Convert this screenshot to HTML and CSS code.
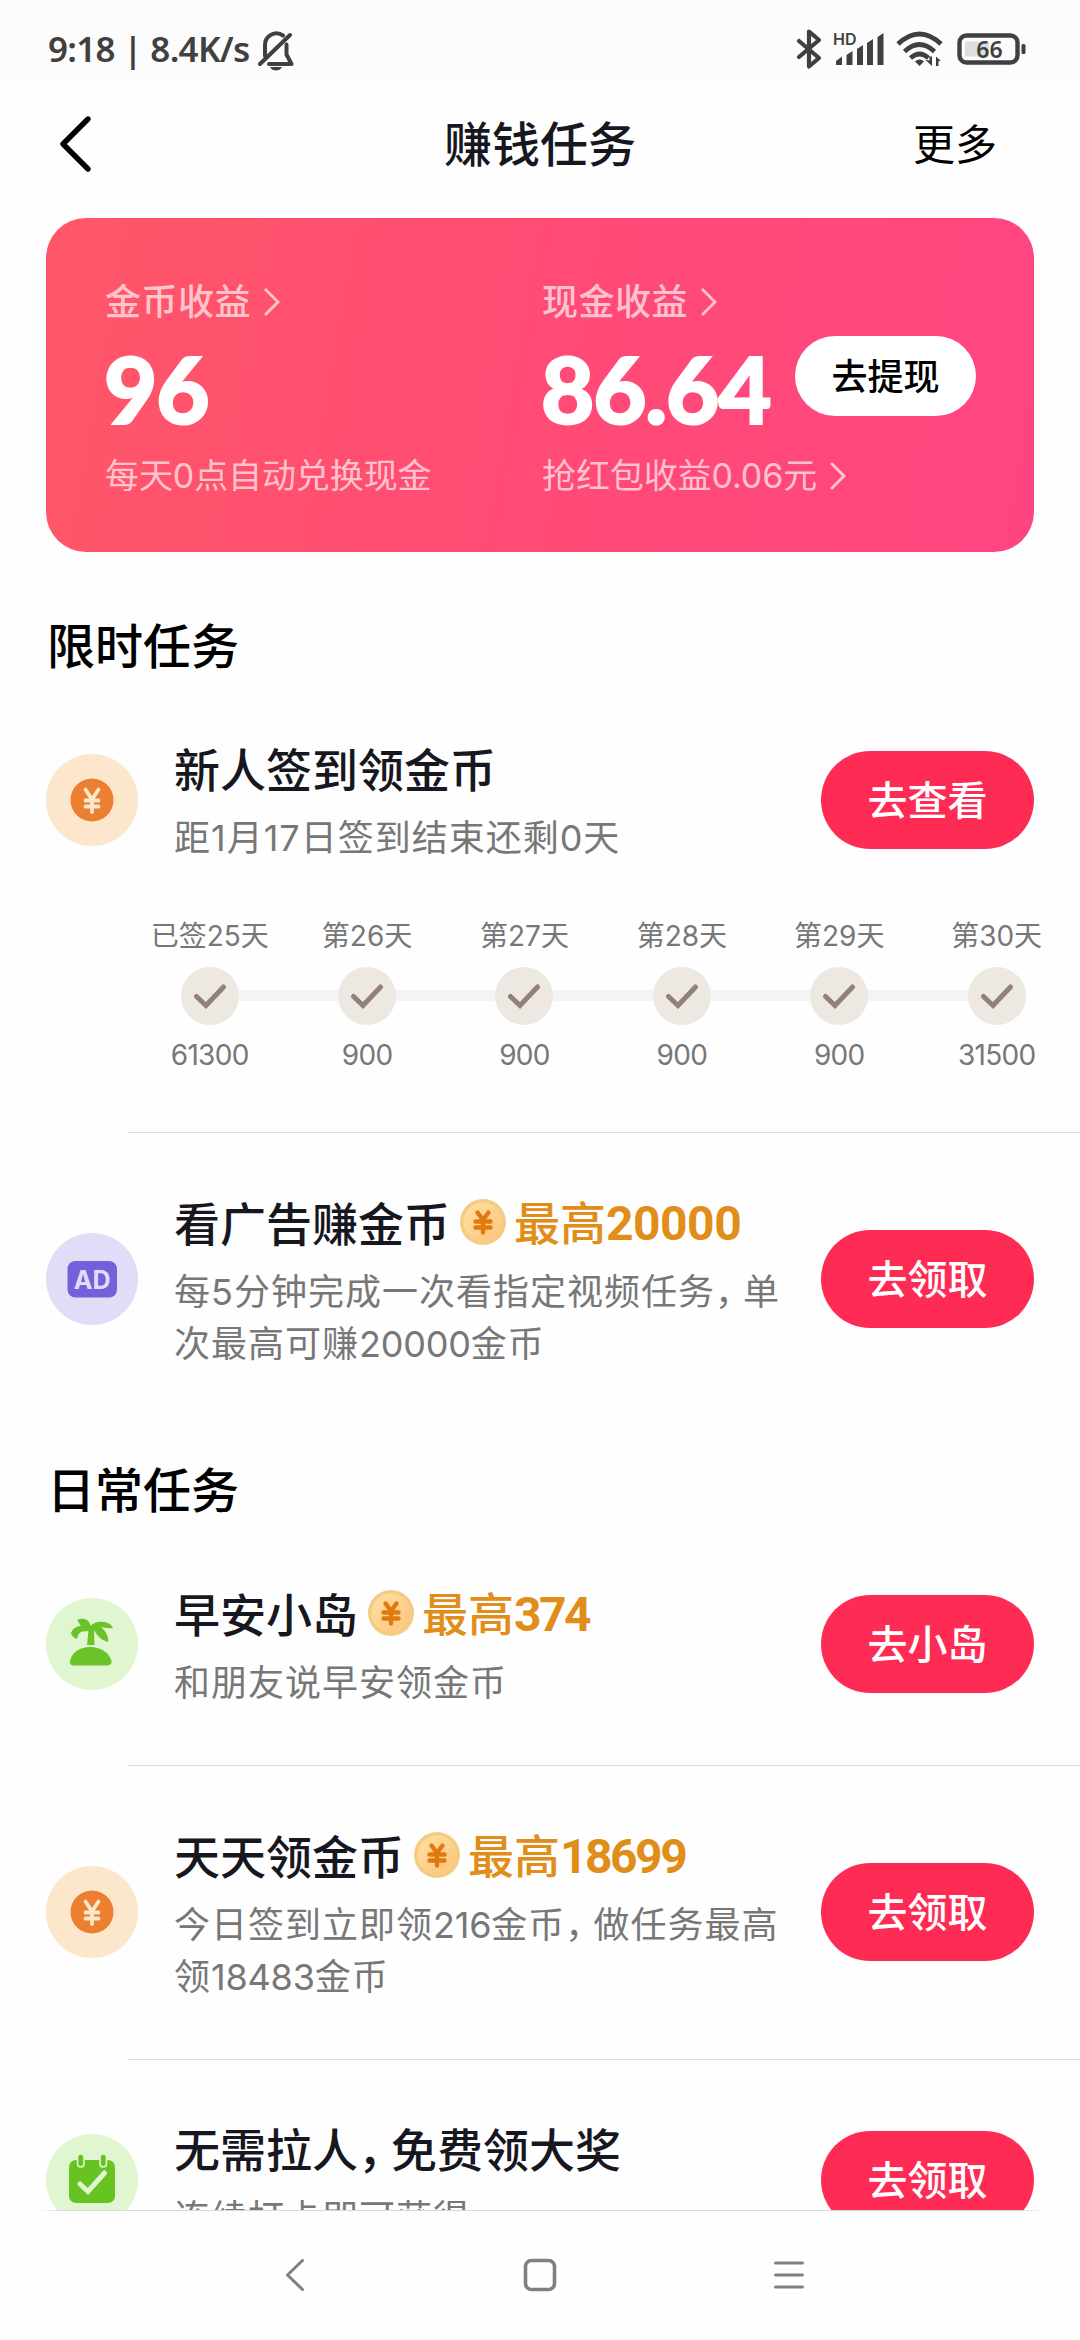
FILE: index.html
```html
<!DOCTYPE html>
<html lang="zh-CN">
<head>
<meta charset="utf-8">
<title>赚钱任务</title>
<link rel="stylesheet" href="styles.css">
</head>
<body>
<svg class="defs" width="0" height="0">
  <defs>
    <linearGradient id="coinFill" x1="0" y1="0" x2="1" y2="1">
      <stop offset="0" stop-color="#ffe0a0"/><stop offset="1" stop-color="#fdc47c"/>
    </linearGradient>
    <symbol id="coin" viewBox="0 0 46 46">
      <circle cx="23" cy="23" r="23" fill="#f3cc84"/>
      <circle cx="23" cy="23" r="19.5" fill="url(#coinFill)"/>
      <path d="M17.500 13.500l5.500 7.500 5.500-7.500M15.500 22.500h15M15.500 28.500h15M23 21v12.500" fill="none" stroke="#e07a10" stroke-width="4.400" stroke-linecap="round" stroke-linejoin="round"/>
    </symbol>
    <symbol id="yuan" viewBox="0 0 92 92">
      <circle cx="46" cy="46" r="46" fill="#fce6cc"/>
      <circle cx="46" cy="46" r="21.5" fill="#ec7f30"/>
      <path d="M39.500 35.500l6.500 10 6.500-10M39.500 46.500h13M39.500 52.500h13M46 45v13" fill="none" stroke="#fce6cc" stroke-width="3.800" stroke-linecap="round" stroke-linejoin="round"/>
    </symbol>
    <symbol id="chev" viewBox="0 0 18 30">
      <path d="M2 2l13 13L2 28" fill="none" stroke="currentColor" stroke-width="2.800"/>
    </symbol>
    <symbol id="done" viewBox="0 0 58 58">
      <circle cx="29" cy="29" r="29" fill="#ede8e2"/>
      <path d="M15.500 29.500L25 38.500 42.500 20" fill="none" stroke="#93807a" stroke-width="5" stroke-linecap="round" stroke-linejoin="miter"/>
    </symbol>
  </defs>
</svg>
<div class="screen">
  <header class="status">
    <span class="clock">9:18 | 8.4K/s</span>
    <svg class="bell" width="36" height="40" viewBox="0 0 36 40" fill="none" stroke="#404040" stroke-width="4">
      <path d="M7 25V14a11.500 11.500 0 0 1 18-9.500M28.500 13.500v10l5 9.500H11M2 33L32 4" stroke-linejoin="round" stroke-linecap="round"/>
      <path d="M12 36h12q-2 3.500-6 3.500T12 36z" fill="#404040" stroke="none"/>
    </svg>
    <span class="grow"></span>
    <svg width="232" height="42" viewBox="0 0 232 42" fill="none" stroke="#404040">
      <path d="M5 13l20 17-10 8.500V3.500L25 12 5 29" stroke-width="4.200" stroke-linejoin="round" stroke-linecap="round"/>
      <g fill="#404040" stroke="none">
        <text class="hd" x="39" y="17">HD</text>
        <path d="M42 37v-4l6-4.500v8.500zM52.500 37V27l6-4v14zM63 37V21l6-4v20zM73 37V15l6-4v26zM83.500 37V9l6-4v32z"/>
        <path d="M125.500 38l-4.500-4.500q4.500-4 9 0z"/>
        <path d="M138 38v-9.500h-2.500v4l-4-.500zM142 28.500V38h2.500v-5h2.500z"/>
      </g>
      <path d="M104 16q21.500-20 43 0" stroke-width="4.800"/>
      <path d="M110.500 23.500q15-14 30 0" stroke-width="4.800"/>
      <path d="M116.500 30q9-8 18 0" stroke-width="4.600"/>
      <rect x="165.500" y="7.500" width="58" height="27" rx="7" stroke-width="4.400"/>
      <rect x="171" y="13.500" width="24" height="15" fill="#dedede" stroke="none"/>
      <rect x="227.500" y="16" width="4" height="10" rx="1.500" fill="#404040" stroke="none"/>
      <text class="batt" x="195.500" y="29.500" text-anchor="middle">66</text>
    </svg>
  </header>

  <nav class="bar">
    <svg class="back" width="36" height="60" viewBox="0 0 36 60"><path d="M32 4L7 29l25 25" fill="none" stroke="#000" stroke-width="5.400" stroke-linecap="round" stroke-linejoin="round"/></svg>
    <h1>赚钱任务</h1>
    <a class="more">更多</a>
  </nav>

  <section class="card">
    <div class="earn">
      <div class="earn-label">金币收益<svg class="chev"><use href="#chev"/></svg></div>
      <div class="amount">96</div>
      <div class="note">每天0点自动兑换现金</div>
    </div>
    <div class="earn">
      <div class="earn-label">现金收益<svg class="chev"><use href="#chev"/></svg></div>
      <div class="amount">86.64</div>
      <div class="note">抢红包收益0.06元<svg class="chev"><use href="#chev"/></svg></div>
    </div>
    <a class="withdraw">去提现</a>
  </section>

  <main>
    <h2>限时任务</h2>
    <article class="task first">
      <svg class="icon"><use href="#yuan"/></svg>
      <div class="text"><h3>新人签到领金币</h3><p>距1月17日签到结束还剩0天</p></div>
      <a class="btn">去查看</a>
    </article>
    <div class="steps">
      <div class="step"><span>已签25天</span><svg class="tick"><use href="#done"/></svg><span class="coins">61300</span></div>
      <div class="step"><span>第26天</span><svg class="tick"><use href="#done"/></svg><span class="coins">900</span></div>
      <div class="step"><span>第27天</span><svg class="tick"><use href="#done"/></svg><span class="coins">900</span></div>
      <div class="step"><span>第28天</span><svg class="tick"><use href="#done"/></svg><span class="coins">900</span></div>
      <div class="step"><span>第29天</span><svg class="tick"><use href="#done"/></svg><span class="coins">900</span></div>
      <div class="step"><span>第30天</span><svg class="tick"><use href="#done"/></svg><span class="coins">31500</span></div>
    </div>
    <hr>
    <article class="task">
      <svg class="icon" viewBox="0 0 92 92"><circle cx="46" cy="46" r="46" fill="#e2dcf8"/><rect x="21.500" y="28" width="49.500" height="36.500" rx="8" fill="#7560dc"/><text class="ad" x="46.200" y="55.500" text-anchor="middle">AD</text></svg>
      <div class="text"><h3>看广告赚金币<svg class="coin"><use href="#coin"/></svg><span class="prize">最高<b class="wide">20000</b></span></h3><p>每5分钟完成一次看指定视频任务<span class="comma">，</span>单<br>次最高可赚<span class="num">20000</span>金币</p></div>
      <a class="btn">去领取</a>
    </article>

    <h2 class="daily">日常任务</h2>
    <article class="task first">
      <svg class="icon" viewBox="0 0 92 92"><circle cx="46" cy="46" r="46" fill="#dff6d0"/>
        <path d="M24 63c2-9 10-14 20-14s19 5 21.500 14c.5 3-2 4.500-5 4.500H28c-3 0-4.500-1.500-4-4.500z" fill="#6ac328"/>
        <path d="M41 47l1.500-14-6 .5c-4 1-4.500 4-5.500 7.500-3-1-5.500-3-6-6 2-5 6-7 10-7l-4-6c6-3 12-1 13.500 5.500 4-3 8-4.500 12-3.500 5 0 9 2.500 10.500 6-4 .5-8 0-12-1 4 3.500 8 9 7 15-6-1.500-11-6-14-12l.5 15z" fill="#6ac328"/></svg>
      <div class="text"><h3>早安小岛<svg class="coin"><use href="#coin"/></svg><span class="prize">最高<b>374</b></span></h3><p>和朋友说早安领金币</p></div>
      <a class="btn">去小岛</a>
    </article>
    <hr>
    <article class="task">
      <svg class="icon"><use href="#yuan"/></svg>
      <div class="text"><h3>天天领金币<svg class="coin"><use href="#coin"/></svg><span class="prize">最高<b>18699</b></span></h3><p>今日签到立即领<span class="num">216</span>金币<span class="comma">，</span>做任务最高<br>领<span class="num">18483</span>金币</p></div>
      <a class="btn">去领取</a>
    </article>
    <hr>
    <article class="task">
      <svg class="icon" viewBox="0 0 92 92"><circle cx="46" cy="46" r="46" fill="#dff6d0"/><rect x="23" y="26" width="46" height="43" rx="7" fill="#66c322"/>
        <rect x="31.500" y="20" width="6.500" height="13" rx="3.200" fill="#66c322" stroke="#dff6d0" stroke-width="1.600"/><rect x="54" y="20" width="6.500" height="13" rx="3.200" fill="#66c322" stroke="#dff6d0" stroke-width="1.600"/>
        <path d="M34 50l8 7.500L58.500 39" fill="none" stroke="#dff6d0" stroke-width="5" stroke-linecap="round"/></svg>
      <div class="text"><h3>无需拉人<span class="comma">，</span>免费领大奖</h3><p>连续打卡即可获得</p></div>
      <a class="btn">去领取</a>
    </article>
  </main>

  <footer class="sysnav">
    <svg width="520" height="40" viewBox="0 0 520 40" fill="none" stroke="#808080" stroke-width="3" stroke-linecap="round" stroke-linejoin="round">
      <path d="M22.500 4.500L7.500 19l15 14.500"/>
      <rect x="245.500" y="4.500" width="29" height="29" rx="6" stroke-width="3.600"/>
      <path d="M495.500 7h27M495.500 19h27M495.500 31h27"/>
    </svg>
  </footer>
</div>
</body>
</html>
```
FILE: styles.css
```css
* { box-sizing: border-box; margin: 0; padding: 0; }
body {
  background: #fefefe;
  font-family: Inter, "Noto Sans CJK SC", sans-serif;
  color: #000;
}
.defs { position: absolute; }
.screen { width: 1080px; height: 2340px; display: flex; flex-direction: column; overflow: hidden; }

.status { height: 80px; background: #fcfcfc; display: flex; align-items: flex-start; padding: 28px 54px 0 48px; color: #404040; }
.clock { font: 600 35px/42px "Noto Sans", sans-serif; letter-spacing: -.7px; width: 210px; white-space: nowrap; }
.bell { margin-top: 3px; }
.grow { flex: 1; }
.hd { font: 600 16px Inter, sans-serif; }
.batt { font: 600 23px "Noto Sans", sans-serif; fill: #404040; stroke: none; }

.bar { height: 130px; display: grid; grid-template-columns: 240px 1fr 240px; align-items: center; padding: 0 56px; }
h1 { font-size: 48px; line-height: 60px; font-weight: 500; text-align: center; color: #17171f; }
.more { font-size: 42px; line-height: 60px; text-align: right; padding-right: 27px; }

.card {
  margin: 8px 46px 0; height: 334px; flex: none; border-radius: 40px;
  background: linear-gradient(100deg, #ff5768 0%, #ff4b75 50%, #ff4581 100%);
  display: grid; grid-template-columns: 437px 242px auto; padding: 58px 58px 0 59px;
  align-items: start;
}
.earn-label, .note { color: rgba(255, 255, 255, .68); display: flex; align-items: center; white-space: nowrap; }
.earn-label { font-size: 36px; line-height: 52px; font-weight: 500; letter-spacing: .5px; }
.note { font-size: 34px; line-height: 50px; letter-spacing: -.1px; }
.chev { width: 18px; height: 30px; margin-left: 12px; flex: none; }
.amount { font: 900 92px/100px Lato, sans-serif; letter-spacing: -1.2px; color: #fff; margin: 11px 0 12px -1px; -webkit-text-stroke: 2px #fff; }
.withdraw { width: 181px; height: 80px; margin: 60px 0 0 11px; border-radius: 40px; background: #fff; font-size: 36px; line-height: 82px; font-weight: 500; text-align: center; }

main { height: 1658px; flex: none; overflow: hidden; }
h2 { font-size: 48px; line-height: 60px; font-weight: 500; margin: 65px 47px 0; }
h2.daily { margin-top: 35px; }
.task { display: flex; align-items: center; padding: 62px 46px 58px; }
.task.first { padding-top: 65px; }
.icon { width: 92px; height: 92px; flex: none; margin: 0 36px 5px 0; }
.text { flex: 1; white-space: nowrap; }
h3 { font-size: 46px; line-height: 56px; font-weight: 500; color: #17171f; margin-bottom: 14px; display: flex; align-items: center; }
.text p { font-size: 36px; line-height: 52px; letter-spacing: 1px; margin-bottom: -2px; color: #777; }
.text .num { letter-spacing: -.2px; }
h3 .comma { letter-spacing: -13px; }
p .comma { letter-spacing: -8px; }
.coin { width: 46px; height: 46px; margin: 0 8px 3px 10px; }
.prize { color: #e08d1a; }
.prize b { font: 700 48px/56px Roboto, sans-serif; letter-spacing: -2.500px; }
.prize b.wide { letter-spacing: -.5px; }
.btn { width: 213px; height: 98px; margin-bottom: 5px; border-radius: 49px; background: #fe2c55; color: #fff; font-size: 40px; line-height: 100px; font-weight: 500; text-align: center; }
.ad { font: 700 25px Inter, sans-serif; fill: #e2dcf8; }

.steps {
  margin: -5px 5px 56px 131px; display: grid; grid-template-columns: repeat(6, 157.4px);
  background: linear-gradient(#f4f4f4, #f4f4f4) 79px 75px / 787px 11px no-repeat;
}
.step { display: flex; flex-direction: column; align-items: center; font-size: 28px; line-height: 42px; color: #777; }
.step .coins { letter-spacing: -.7px; line-height: 41px; }
.tick { width: 58px; height: 58px; margin: 10px 0 10px; }
hr { border: 0; height: 1px; background: #dedede; margin-left: 128px; }

.sysnav { flex: 1; padding-top: 45px; display: flex; justify-content: center; border-top: 1px solid; border-image: linear-gradient(90deg, transparent 40px, #d8d8d8 60px, #d8d8d8 1020px, transparent 1045px) 1; }
.sysnav svg { overflow: visible; }
```
